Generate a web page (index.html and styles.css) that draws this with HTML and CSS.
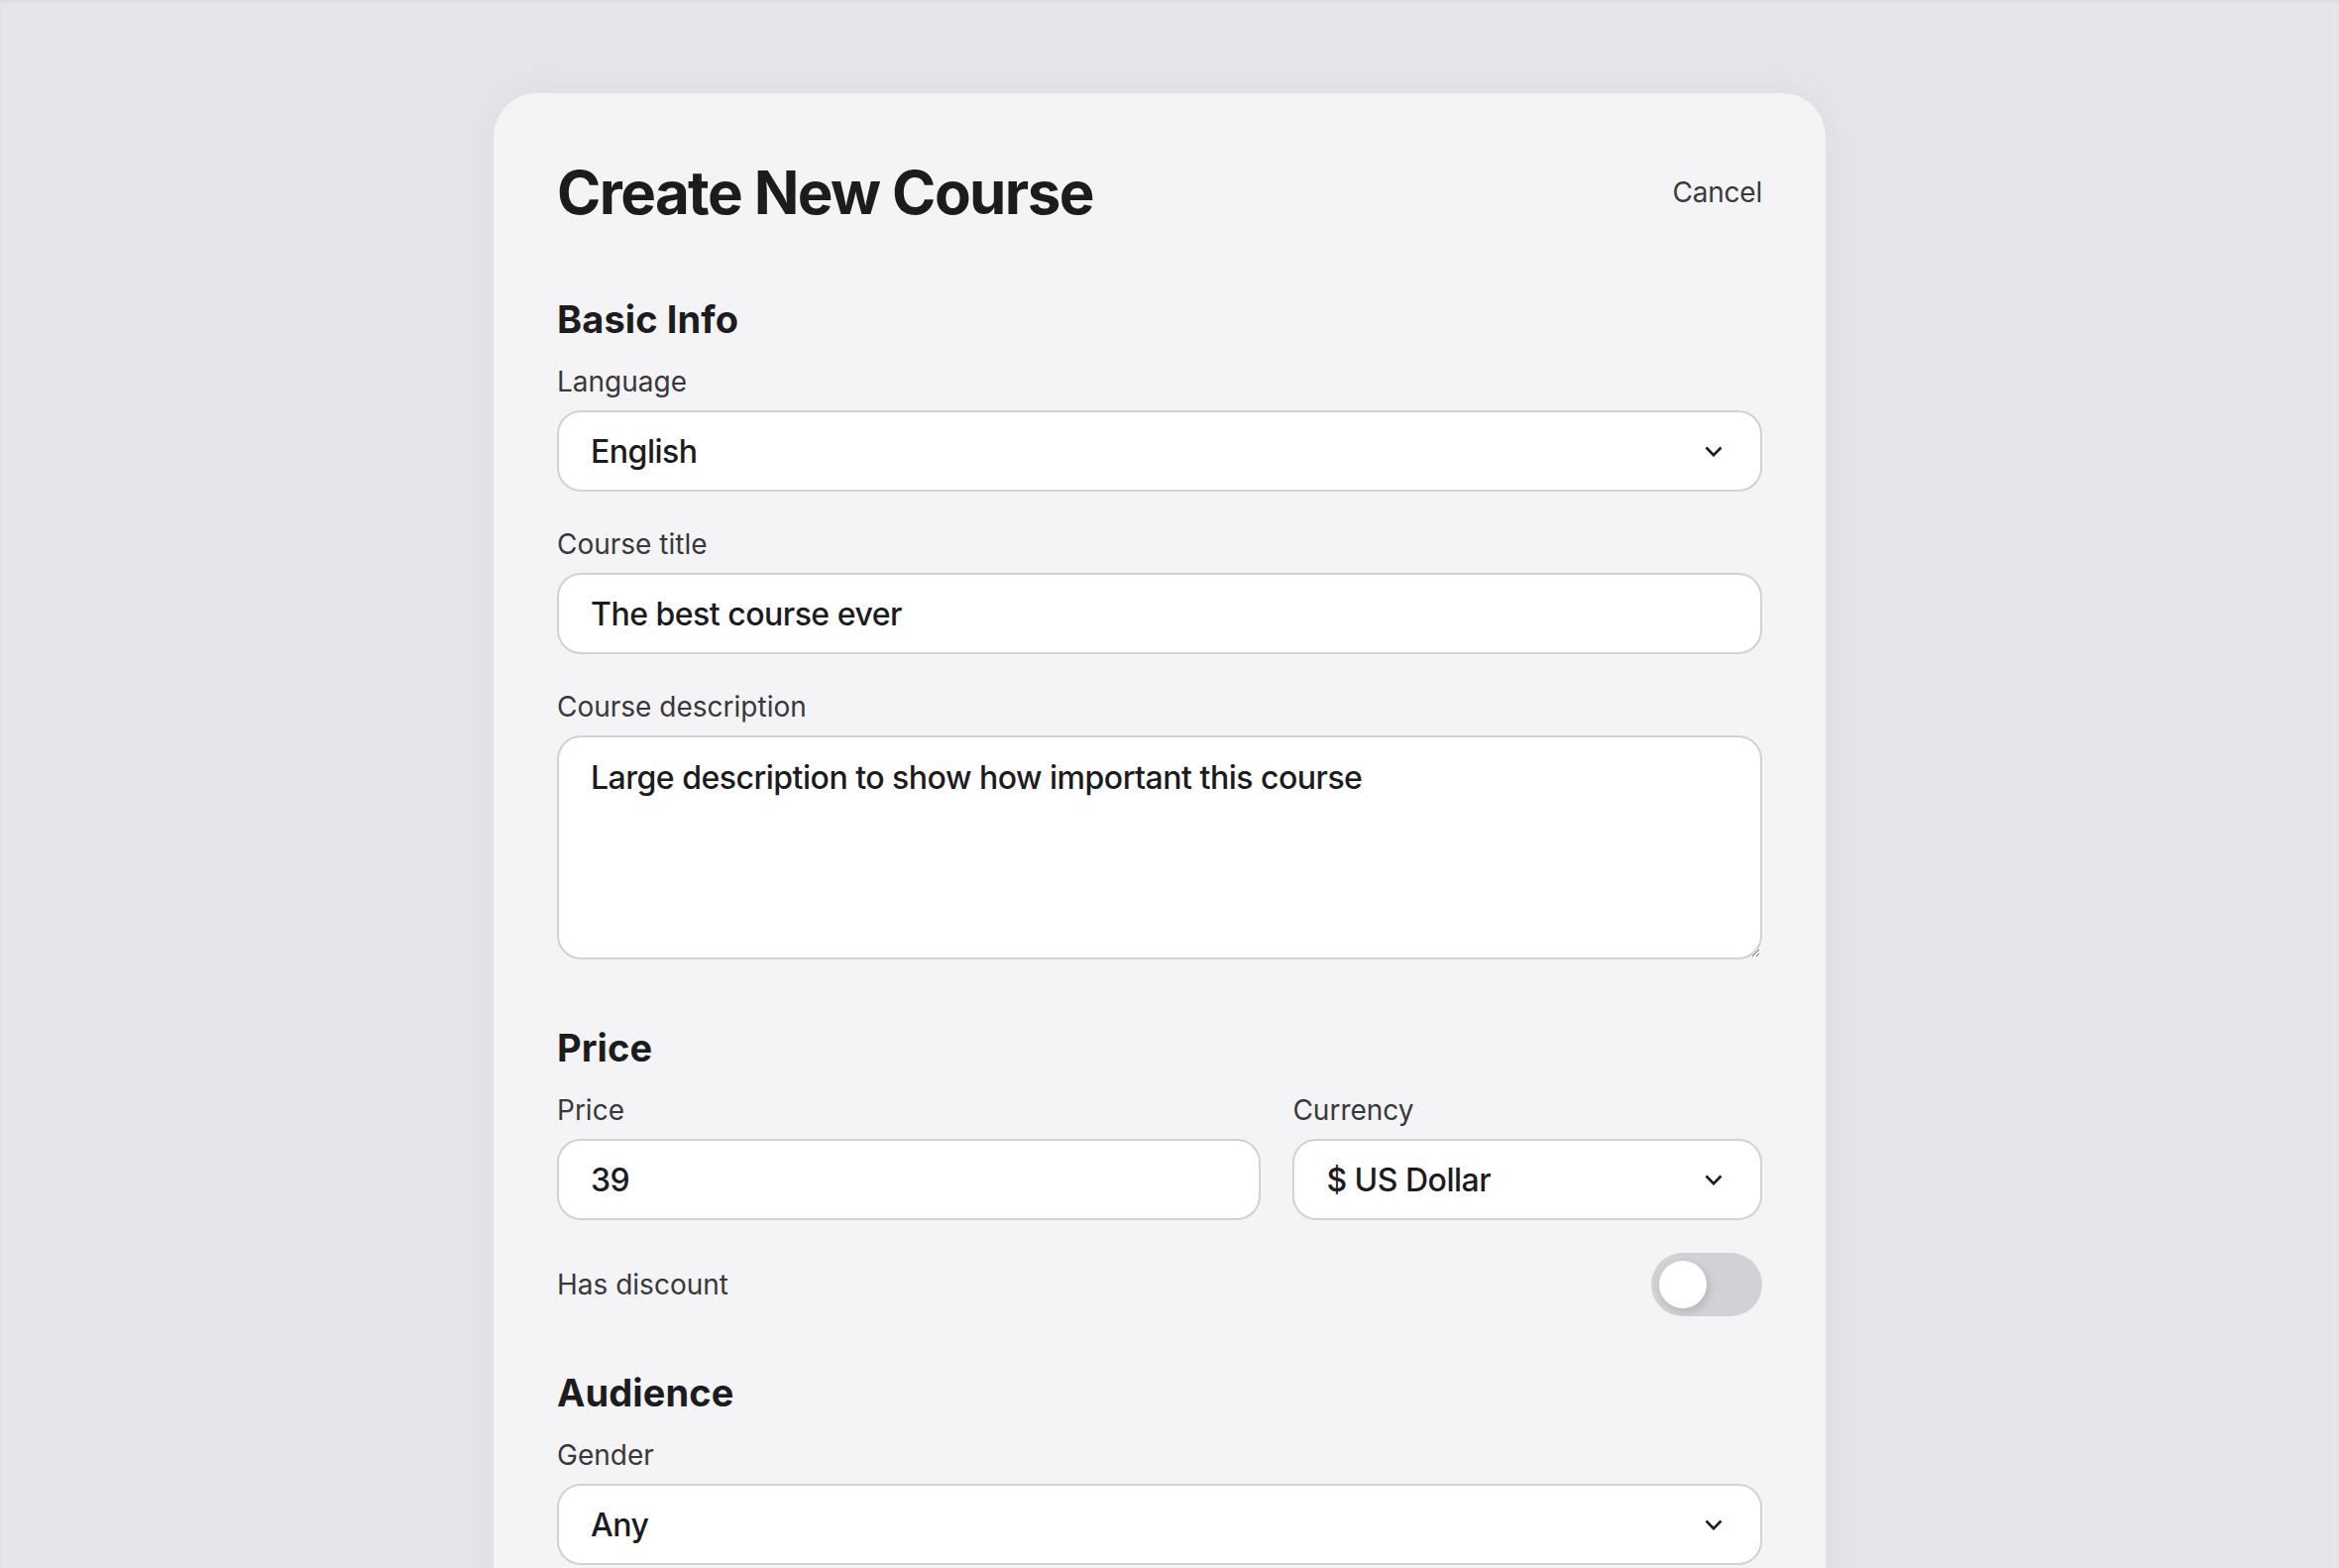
FILE: index.html
```html
<!DOCTYPE html>
<html lang="en">
<head>
    <meta charset="UTF-8">
    <meta name="viewport" content="width=device-width, initial-scale=1.0">
    <title>Create New Course</title>
    <link rel="stylesheet" href="styles.css">
</head>
<body>
    <div class="page">
        <form class="course-card">
            <div class="card-header">
                <h1>Create New Course</h1>
                <a href="#" class="cancel-link">Cancel</a>
            </div>

            <!-- Basic info -->
            <section class="form-section">
                <h2>Basic Info</h2>
                <div class="field">
                    <label for="language">Language</label>
                    <div class="select-wrap">
                        <select id="language">
                            <option>English</option>
                            <option>Spanish</option>
                            <option>French</option>
                        </select>
                        <svg class="chevron" viewBox="0 0 18 11" width="18" height="11"><path d="M1.5 1.5 9 9.2 16.5 1.5"/></svg>
                    </div>
                </div>
                <div class="field">
                    <label for="title">Course title</label>
                    <input type="text" id="title" value="The best course ever">
                </div>
                <div class="field">
                    <label for="description">Course description</label>
                    <textarea id="description">Large description to show how important this course</textarea>
                </div>
            </section>

            <!-- Price -->
            <section class="form-section">
                <h2>Price</h2>
                <div class="price-row">
                    <div class="field">
                        <label for="price">Price</label>
                        <input type="text" id="price" value="39">
                    </div>
                    <div class="field">
                        <label for="currency">Currency</label>
                        <div class="select-wrap">
                            <select id="currency">
                                <option>$ US Dollar</option>
                                <option>€ Euro</option>
                            </select>
                            <svg class="chevron" viewBox="0 0 18 11" width="18" height="11"><path d="M1.5 1.5 9 9.2 16.5 1.5"/></svg>
                        </div>
                    </div>
                </div>
                <div class="toggle-row">
                    <span class="toggle-label">Has discount</span>
                    <label class="switch">
                        <input type="checkbox">
                        <span class="track"></span>
                    </label>
                </div>
            </section>

            <!-- Audience -->
            <section class="form-section">
                <h2>Audience</h2>
                <div class="field">
                    <label for="gender">Gender</label>
                    <div class="select-wrap">
                        <select id="gender">
                            <option>Any</option>
                            <option>Female</option>
                            <option>Male</option>
                        </select>
                        <svg class="chevron" viewBox="0 0 18 11" width="18" height="11"><path d="M1.5 1.5 9 9.2 16.5 1.5"/></svg>
                    </div>
                </div>
                <div class="field">
                    <label for="age">Age</label>
                    <div class="select-wrap">
                        <select id="age">
                            <option>All ages</option>
                        </select>
                        <svg class="chevron" viewBox="0 0 18 11" width="18" height="11"><path d="M1.5 1.5 9 9.2 16.5 1.5"/></svg>
                    </div>
                </div>
            </section>
        </form>
    </div>
</body>
</html>
```

FILE: styles.css
```css
html, body {
    margin: 0;
    padding: 0;
}
body {
    background-color: #e5e5ea;
    font-family: Inter, "Noto Sans", sans-serif;
    color: #1c1c1e;
    min-height: 100vh;
    box-shadow: inset 0 2px 3px -1px rgba(0, 0, 0, 0.08);
}
.page {
    display: flex;
    justify-content: center;
    padding: 94px 20px 0 0;
}
.course-card {
    width: 1344px;
    box-sizing: border-box;
    padding: 64px 64px 80px;
    background-color: #f4f4f7;
    border-radius: 44px;
    box-shadow: 0 0 40px rgba(0, 0, 0, 0.05);
}
.card-header {
    display: flex;
    justify-content: space-between;
    align-items: center;
    margin-bottom: 69px;
}
h1 {
    margin: 0;
    font-size: 60px;
    line-height: 72px;
    font-weight: 700;
    letter-spacing: -1.6px;
}
.cancel-link {
    font-size: 28px;
    color: #3a3a3c;
    text-decoration: none;
    letter-spacing: -0.2px;
}
/* Sections */
.form-section {
    margin-bottom: 66px;
}
.form-section h2 {
    margin: 0 0 20px;
    font-size: 38px;
    line-height: 46px;
    font-weight: 700;
    letter-spacing: 0.1px;
}
.field {
    display: flex;
    flex-direction: column;
    margin-bottom: 33px;
}
.field label {
    font-size: 28px;
    line-height: 40px;
    color: #38383a;
    margin-bottom: 9px;
}
.field input,
.field select,
.field textarea {
    box-sizing: border-box;
    width: 100%;
    height: 82px;
    padding: 0 30px 0 32px;
    border: 2px solid #d1d1d6;
    border-radius: 24px;
    background-color: #ffffff;
    font-family: inherit;
    font-size: 32px;
    font-weight: 500;
    letter-spacing: -0.5px;
    color: #1c1c1e;
    outline: none;
}
.field textarea {
    height: 226px;
    padding: 21px 30px 20px 32px;
    line-height: 40px;
    resize: vertical;
}
.select-wrap {
    position: relative;
}
.field select {
    appearance: none;
    -webkit-appearance: none;
}
.chevron {
    position: absolute;
    right: 40px;
    top: 36px;
    fill: none;
    stroke: #1c1c1e;
    stroke-width: 2.6;
    pointer-events: none;
}
/* Price row */
.price-row {
    display: grid;
    grid-template-columns: 3fr 2fr;
    gap: 32px;
}
.toggle-row {
    display: flex;
    justify-content: space-between;
    align-items: center;
    margin-bottom: -12px;
}
.toggle-label {
    font-size: 28px;
    color: #38383a;
}
.switch {
    position: relative;
    display: block;
    width: 112px;
    height: 64px;
}
.switch input {
    display: none;
}
.track {
    display: block;
    width: 100%;
    height: 100%;
    border-radius: 32px;
    background-color: #d1d1d6;
}
.track::after {
    content: "";
    position: absolute;
    left: 8px;
    top: 8px;
    width: 48px;
    height: 48px;
    border-radius: 50%;
    background-color: #ffffff;
    box-shadow: 2px 3px 8px rgba(0, 0, 0, 0.15);
}
```
